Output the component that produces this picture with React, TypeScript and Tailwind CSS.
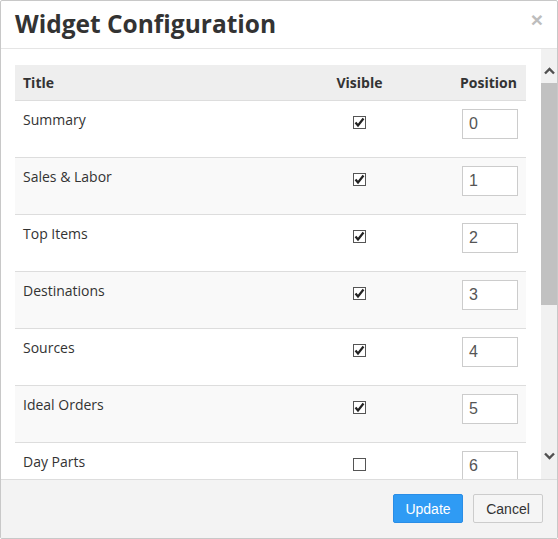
import React from "react";

type Widget = { title: string; visible: boolean; position: number };

const widgets: Widget[] = [
  { title: "Summary", visible: true, position: 0 },
  { title: "Sales & Labor", visible: true, position: 1 },
  { title: "Top Items", visible: true, position: 2 },
  { title: "Destinations", visible: true, position: 3 },
  { title: "Sources", visible: true, position: 4 },
  { title: "Ideal Orders", visible: true, position: 5 },
  { title: "Day Parts", visible: false, position: 6 },
];

function Checkbox({ checked }: { checked: boolean }) {
  return (
    <span className="inline-flex h-[13px] w-[13px] items-center justify-center border border-[#555] bg-white">
      {checked && (
        <svg width="11" height="11" viewBox="0 0 11 11">
          <path d="M1.5 5.5 L4 8.5 L9.5 1.5" fill="none" stroke="#222" strokeWidth="2.2" />
        </svg>
      )}
    </span>
  );
}

function Chevron({ up }: { up?: boolean }) {
  return (
    <svg width="11" height="8" viewBox="0 0 11 8">
      <path
        d={up ? "M1 6.5 L5.5 2 L10 6.5" : "M1 1.5 L5.5 6 L10 1.5"}
        fill="none"
        stroke="#505050"
        strokeWidth="2.4"
      />
    </svg>
  );
}

export default function App() {
  return (
    <div className="h-[539px] w-[558px] bg-white">
      <div className="flex h-full w-full flex-col overflow-hidden rounded-[2px] border border-[#c8c8c8] bg-white">
        {/* Header */}
        <div className="flex h-[48px] shrink-0 items-start justify-between border-b border-[#e5e5e5] pl-[14px] pr-[14px]">
          <h1 className="mt-[5px] font-['Open_Sans',sans-serif] text-[24.5px] font-bold leading-[36px] text-[#333]">
            Widget Configuration
          </h1>
          <span className="mt-[7px] font-['Liberation_Sans',sans-serif] text-[21px] font-bold leading-[24px] text-[#bdbdbd]">
            ×
          </span>
        </div>

        {/* Body */}
        <div className="flex h-[430px] shrink-0">
          <div className="flex-1 overflow-hidden pl-[14px] pr-[15px] pt-[16px]">
            <div className="font-['Open_Sans',sans-serif] text-[14px] text-[#333]">
              <div className="grid h-[36px] grid-cols-[289px_111px_111px] items-center border-b border-[#ddd] bg-[#eee] font-bold">
                <div className="pl-[8px]">Title</div>
                <div className="text-center">Visible</div>
                <div className="pr-[9px] text-right">Position</div>
              </div>
              {widgets.map((w, i) => (
                <div
                  key={w.title}
                  className={
                    "grid h-[57px] grid-cols-[289px_111px_111px] border-b border-[#ddd] " +
                    (i % 2 === 1 ? "bg-[#f9f9f9]" : "bg-white")
                  }
                >
                  <div className="pl-[8px] pt-[8px] leading-[22px]">{w.title}</div>
                  <div className="flex justify-center pt-[15px]">
                    <Checkbox checked={w.visible} />
                  </div>
                  <div className="flex justify-end pr-[8px] pt-[8px]">
                    <div className="flex h-[30px] w-[56px] items-center border border-[#ccc] bg-white pl-[6px] font-['Liberation_Sans',sans-serif] text-[16px] text-[#555]">
                      {w.position}
                    </div>
                  </div>
                </div>
              ))}
            </div>
          </div>

          {/* Scrollbar */}
          <div className="flex w-[16px] shrink-0 flex-col bg-[#f1f1f1]">
            <div className="flex h-[34px] items-center justify-center pt-[9px]">
              <Chevron up />
            </div>
            <div className="h-[222px] bg-[#c1c1c1]" />
            <div className="flex-1" />
            <div className="flex h-[34px] items-center justify-center pb-[12px]">
              <Chevron />
            </div>
          </div>
        </div>

        {/* Footer */}
        <div className="flex flex-1 items-start justify-end gap-[10px] border-t border-[#ddd] bg-[#f3f3f3] pr-[14px] pt-[14px] font-['Liberation_Sans',sans-serif] text-[14px] leading-[16px]">
          <button className="h-[29px] w-[70px] rounded-[2px] border border-[#2a8de6] bg-[#2f9bf4] text-white">
            Update
          </button>
          <button className="h-[29px] w-[70px] rounded-[2px] border border-[#ccc] bg-[#f5f5f5] text-[#333]">
            Cancel
          </button>
        </div>
      </div>
    </div>
  );
}
